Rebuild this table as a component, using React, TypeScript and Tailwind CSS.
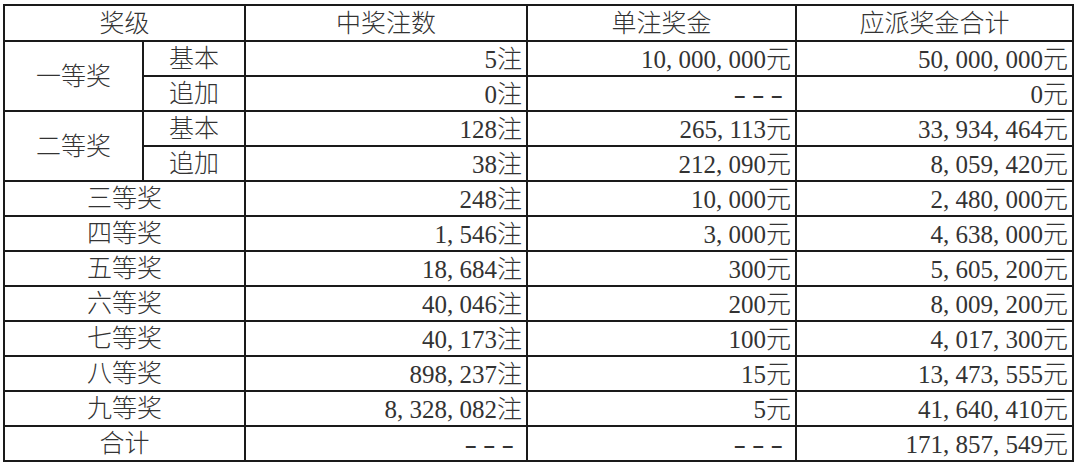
import React from "react";

const font = { fontFamily: '"Liberation Serif", "Noto Sans CJK SC", serif' };

const cellBase = "bg-white flex items-center text-[25px] leading-none font-light text-[#333333] whitespace-nowrap";
const C = ({ children, cls = "" }: { children?: React.ReactNode; cls?: string }) => (
  <div className={`${cellBase} justify-center ${cls}`}>{children}</div>
);
const R = ({ children, cls = "" }: { children?: React.ReactNode; cls?: string }) => (
  <div className={`${cellBase} justify-end pr-[4px] pt-[2px] ${cls}`}>{children}</div>
);
const D = () => <R><span className="tracking-[4px] scale-x-150 inline-block origin-right mr-[2px]">---</span></R>;

const rows: [string, string, string, string][] = [
  ["三等奖", "248注", "10, 000元", "2, 480, 000元"],
  ["四等奖", "1, 546注", "3, 000元", "4, 638, 000元"],
  ["五等奖", "18, 684注", "300元", "5, 605, 200元"],
  ["六等奖", "40, 046注", "200元", "8, 009, 200元"],
  ["七等奖", "40, 173注", "100元", "4, 017, 300元"],
  ["八等奖", "898, 237注", "15元", "13, 473, 555元"],
  ["九等奖", "8, 328, 082注", "5元", "41, 640, 410元"],
];

export default function App() {
  return (
    <div className="w-[1080px] h-[469px] bg-white pl-[3px] pt-[4px]" style={font}>
      <div className="grid w-fit bg-[#1a1a1a] p-[2px] gap-[2px] grid-cols-[137px_100px_280px_267px_275px] grid-rows-[34px_repeat(12,33px)]">
        <C cls="col-span-2">奖级</C>
        <C>中奖注数</C>
        <C>单注奖金</C>
        <C>应派奖金合计</C>

        <C cls="row-span-2">一等奖</C>
        <C>基本</C>
        <R>5注</R>
        <R>10, 000, 000元</R>
        <R>50, 000, 000元</R>
        <C>追加</C>
        <R>0注</R>
        <D />
        <R>0元</R>

        <C cls="row-span-2">二等奖</C>
        <C>基本</C>
        <R>128注</R>
        <R>265, 113元</R>
        <R>33, 934, 464元</R>
        <C>追加</C>
        <R>38注</R>
        <R>212, 090元</R>
        <R>8, 059, 420元</R>

        {rows.map((r) => (
          <React.Fragment key={r[0]}>
            <C cls="col-span-2">{r[0]}</C>
            <R>{r[1]}</R>
            <R>{r[2]}</R>
            <R>{r[3]}</R>
          </React.Fragment>
        ))}

        <C cls="col-span-2">合计</C>
        <D />
        <D />
        <R>171, 857, 549元</R>
      </div>
    </div>
  );
}
